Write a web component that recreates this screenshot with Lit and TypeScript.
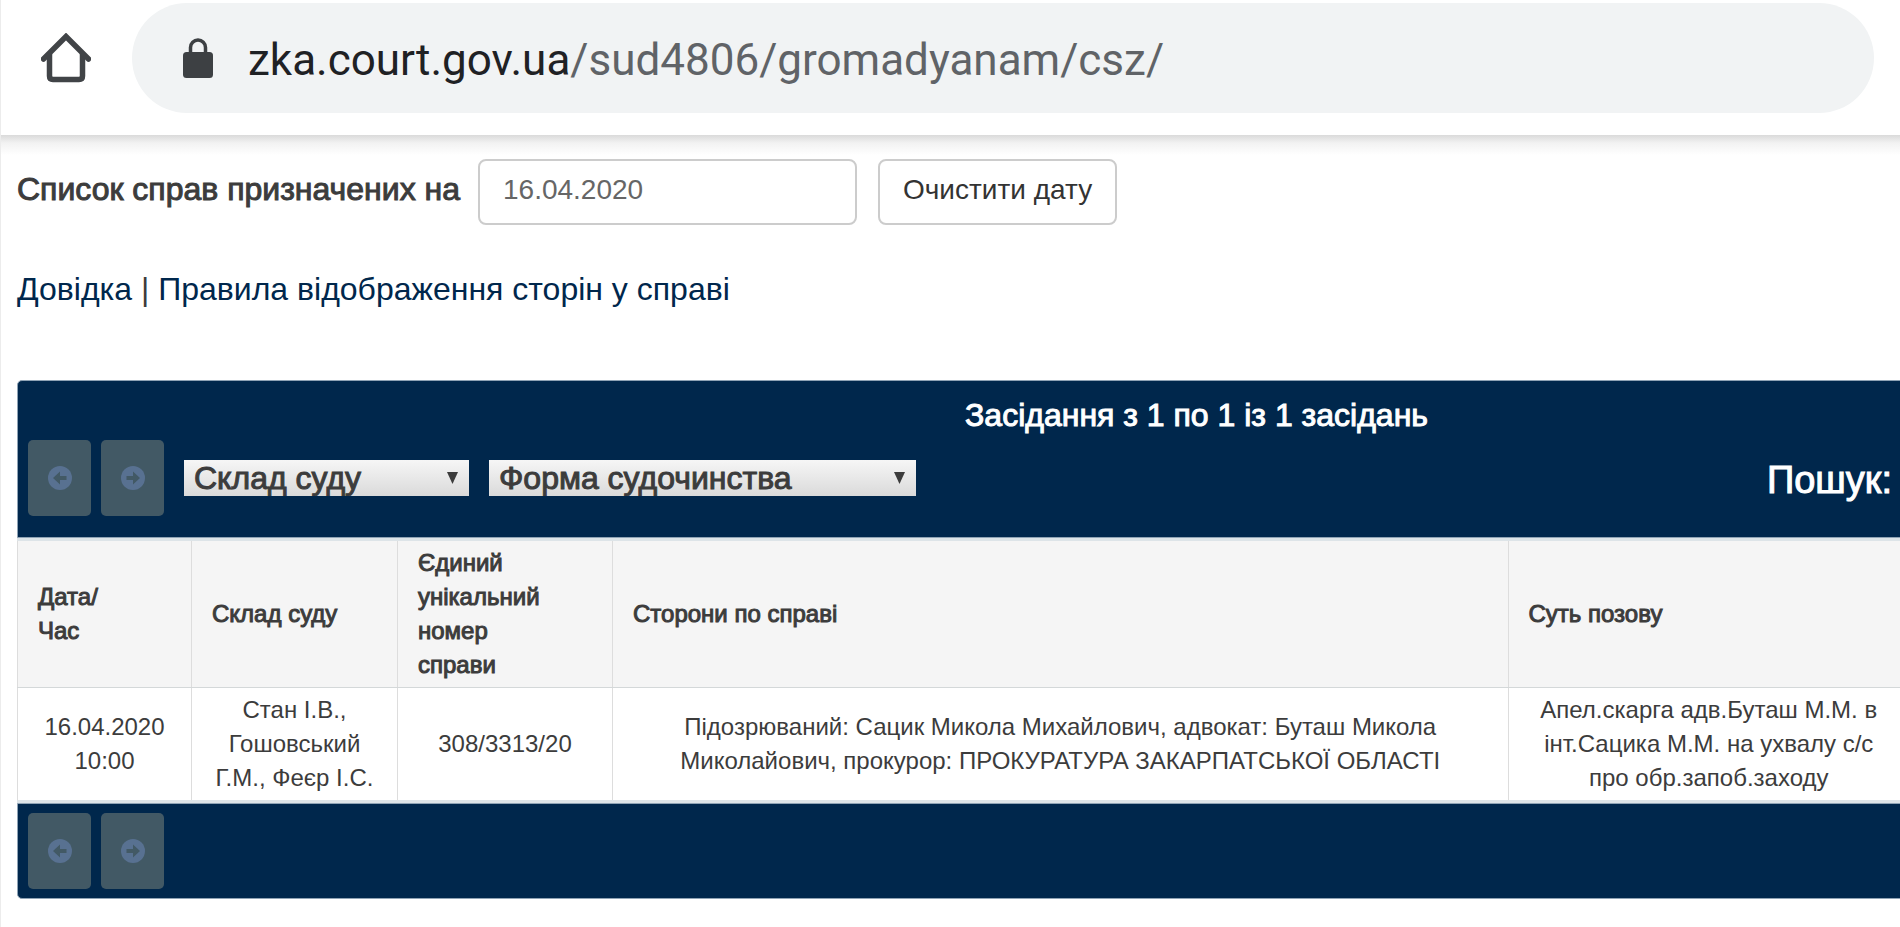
import { LitElement, html, css, svg } from "lit";
import { customElement, property, state } from "lit/decorators.js";

interface Hearing {
  time: string;
  judges: string;
  number: string;
  parties: string;
  claim: string;
}

const hearings: Hearing[] = [
  {
    time: "16.04.2020 10:00",
    judges: "Стан І.В., Гошовський Г.М., Феєр І.С.",
    number: "308/3313/20",
    parties:
      "Підозрюваний: Сацик Микола Михайлович, адвокат: Буташ Микола Миколайович, прокурор: ПРОКУРАТУРА ЗАКАРПАТСЬКОЇ ОБЛАСТІ",
    claim: "Апел.скарга адв.Буташ М.М. в інт.Сацика М.М. на ухвалу с/с про обр.запоб.заходу",
  },
];

@customElement("browser-bar")
export class BrowserBar extends LitElement {
  static styles = css`
    :host {
      display: flex;
      align-items: center;
      gap: 41px;
      padding: 3px 26px 22px 40px;
      background: #fff;
    }
    .home {
      display: block;
      padding: 0;
      border: 0;
      background: none;
      line-height: 0;
    }
    .address {
      flex: 1;
      display: flex;
      align-items: center;
      gap: 35px;
      height: 110px;
      padding-left: 51px;
      box-sizing: border-box;
      border-radius: 55px;
      background: #f1f3f4;
      font: 44px/60px Roboto, sans-serif;
      color: #606367;
    }
    .host {
      color: #1f2124;
    }
    .url {
      padding-top: 4px;
    }
    .lock {
      display: block;
    }
  `;

  render() {
    return html`
      <button class="home" aria-label="Головна">
        <svg width="50" height="50" viewBox="0 0 50 50" fill="none" stroke="#414447">
          <path d="M8.500 21V43Q8.500 46.500 12 46.500H38Q41.500 46.500 41.500 43V21" stroke-width="5.500" />
          <path d="M2.500 26L25 3.500L47.500 26" stroke-width="5.500" stroke-linecap="round" />
        </svg>
      </button>
      <div class="address">
        <svg class="lock" width="30" height="40" viewBox="0 0 30 40">
          <path d="M7.500 15V9.500a7.500 7.500 0 0 1 15 0V15" fill="none" stroke="#3d4043" stroke-width="3.500" />
          <rect y="14" width="30" height="26" rx="3.500" fill="#3d4043" />
        </svg>
        <span class="url"><span class="host">zka.court.gov.ua</span>/sud4806/gromadyanam/csz/</span>
      </div>
    `;
  }
}

@customElement("page-buttons")
export class PageButtons extends LitElement {
  static styles = css`
    :host {
      display: flex;
      gap: 10px;
    }
    .step {
      display: grid;
      place-items: center;
      width: 63px;
      height: 76px;
      padding: 0;
      border: 0;
      border-radius: 5px;
      background: #425965;
    }
  `;

  private arrow(d: string) {
    return html`<svg width="24" height="24" viewBox="0 0 24 24">
      ${svg`<circle cx="12" cy="12" r="12" fill="#587191"/><path d=${d} fill="#425965"/>`}
    </svg>`;
  }

  render() {
    return html`
      <button class="step" disabled aria-label="Назад">
        ${this.arrow("M5 12L12 5.500V10H18.500V14H12V18.500Z")}
      </button>
      <button class="step" disabled aria-label="Вперед">
        ${this.arrow("M19 12L12 5.500V10H5.500V14H12V18.500Z")}
      </button>
    `;
  }
}

@customElement("filter-select")
export class FilterSelect extends LitElement {
  @property() label = "";

  static styles = css`
    :host {
      display: grid;
      align-items: center;
    }
    .box {
      grid-area: 1 / 1;
      appearance: none;
      width: 100%;
      height: 36px;
      padding: 0 10px;
      border: 0;
      border-radius: 0;
      background: linear-gradient(#f6f6f6, #dadada);
      font: 32px/36px "Liberation Sans", Arial, sans-serif;
      color: #3c3c3c;
      -webkit-text-stroke: 1px #3c3c3c;
    }
    .mark {
      grid-area: 1 / 1;
      justify-self: end;
      margin-right: 11px;
      pointer-events: none;
    }
  `;

  render() {
    return html`
      <select class="box" aria-label=${this.label}>
        <option>${this.label}</option>
      </select>
      <svg class="mark" width="11" height="12" viewBox="0 0 11 12">
        <path d="M0 0H11L5.500 12Z" fill="#3c3c3c" />
      </svg>
    `;
  }
}

@customElement("app-root")
export class AppRoot extends LitElement {
  @state() private date = "16.04.2020";

  static styles = css`
    :host {
      display: block;
      min-height: 100vh;
      box-sizing: border-box;
      overflow: hidden;
      border-left: 1px solid #ececec;
      background: #fff;
      font-family: "Liberation Sans", Arial, sans-serif;
      color: #3c3c3c;
    }
    .page {
      padding: 24px 0 0 16px;
      background: linear-gradient(#dadada, #f2f2f2 8px, #fff 20px) no-repeat;
    }
    .date-form {
      display: flex;
      align-items: center;
    }
    .date-label {
      margin-right: 18px;
      padding-bottom: 6px;
      font-size: 32px;
      line-height: 36px;
      -webkit-text-stroke: 1px currentColor;
    }
    .date,
    .clear {
      height: 66px;
      box-sizing: border-box;
      padding: 0 23px 4px;
      border: 2px solid #ccc;
      border-radius: 8px;
      background: #fff;
      font-family: inherit;
      font-size: 28px;
    }
    .date {
      width: 379px;
      margin-right: 21px;
      color: #666;
    }
    .clear {
      color: #333;
    }
    .links {
      margin: 46px 0 73px;
      font-size: 32px;
      line-height: 36px;
    }
    .link {
      color: #00274c;
      text-decoration: none;
    }
    .panel {
      margin-right: -9px;
    }
    .top,
    .bottom {
      border: 1px solid #8fa3b5;
      background: #00274c;
    }
    .top {
      padding: 16px 16px 21px 10px;
      border-radius: 5px 5px 0 0;
      color: #fff;
    }
    .title {
      margin: 0 0 7px;
      padding-left: calc(50% + 5px);
      font-size: 32px;
      font-weight: normal;
      line-height: 36px;
      -webkit-text-stroke: 1px currentColor;
    }
    .tools {
      display: flex;
      align-items: center;
      gap: 20px;
    }
    .court {
      width: 285px;
    }
    .form {
      width: 427px;
    }
    .search {
      margin-left: auto;
      padding-top: 4px;
      font-size: 38px;
      line-height: 44px;
      -webkit-text-stroke: 1px currentColor;
    }
    .bottom {
      padding: 9px 10px;
      border-radius: 0 0 5px 5px;
    }
    .hearings {
      width: 100%;
      table-layout: fixed;
      border-collapse: collapse;
      border-top: 3px solid #dde4e8;
      border-bottom: 3px solid #dde4e8;
      font-size: 24px;
      line-height: 34px;
    }
    .head,
    .cell {
      padding: 5px 20px;
      border-left: 1px solid #ddd;
    }
    .head {
      padding-right: 48px;
      border-bottom: 1px solid #d4d8d9;
      background: #f5f5f5;
      font-weight: normal;
      text-align: left;
      -webkit-text-stroke: 1px currentColor;
    }
    .judges {
      padding-right: 20px;
    }
    .cell {
      text-align: center;
    }
    .time-col {
      width: 174px;
    }
    .judges-col {
      width: 206px;
    }
    .number-col {
      width: 215px;
    }
    .claim-col {
      width: 401px;
    }
  `;

  private onInput(e: Event) {
    this.date = (e.target as HTMLInputElement).value;
  }

  render() {
    return html`
      <browser-bar></browser-bar>
      <main class="page">
        <div class="date-form">
          <label class="date-label" for="date">Список справ призначених на</label>
          <input class="date" id="date" type="text" .value=${this.date} @input=${this.onInput} />
          <button class="clear" @click=${() => (this.date = "")}>Очистити дату</button>
        </div>
        <div class="links">
          <a class="link" href="#help">Довідка</a> |
          <a class="link" href="#rules">Правила відображення сторін у справі</a>
        </div>
        <section class="panel">
          <div class="top">
            <h2 class="title">Засідання з 1 по 1 із 1 засідань</h2>
            <div class="tools">
              <page-buttons></page-buttons>
              <filter-select class="court" label="Склад суду"></filter-select>
              <filter-select class="form" label="Форма судочинства"></filter-select>
              <span class="search">Пошук:</span>
            </div>
          </div>
          <table class="hearings">
            <colgroup>
              <col class="time-col" />
              <col class="judges-col" />
              <col class="number-col" />
              <col />
              <col class="claim-col" />
            </colgroup>
            <thead>
              <tr>
                <th class="head">Дата/<br />Час</th>
                <th class="head judges">Склад суду</th>
                <th class="head">Єдиний унікальний номер справи</th>
                <th class="head">Сторони по справі</th>
                <th class="head">Суть позову</th>
              </tr>
            </thead>
            <tbody>
              ${hearings.map(
                (h) => html`<tr>
                  <td class="cell">${h.time}</td>
                  <td class="cell">${h.judges}</td>
                  <td class="cell">${h.number}</td>
                  <td class="cell">${h.parties}</td>
                  <td class="cell">${h.claim}</td>
                </tr>`
              )}
            </tbody>
          </table>
          <div class="bottom"><page-buttons></page-buttons></div>
        </section>
      </main>
    `;
  }
}
